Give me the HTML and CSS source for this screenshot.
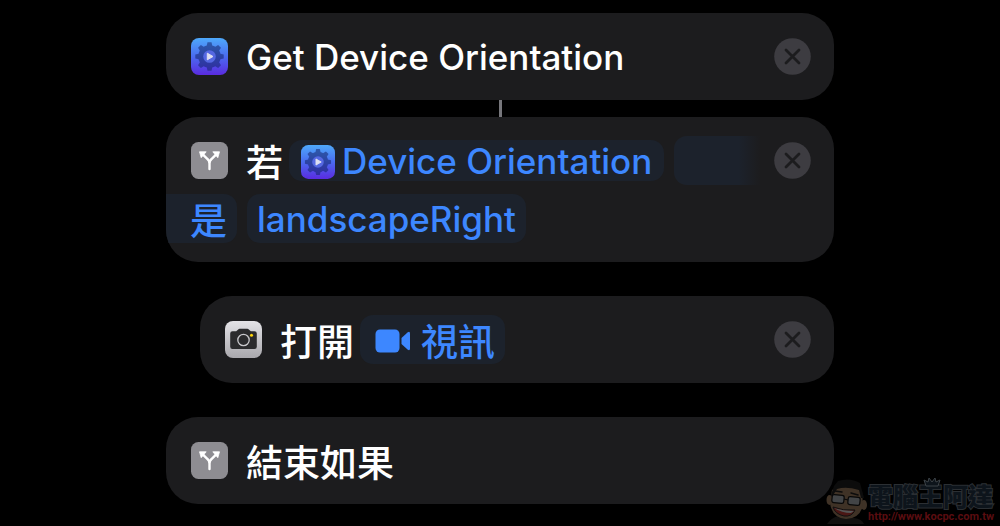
FILE: index.html
```html
<!DOCTYPE html>
<html lang="zh-Hant">
<head>
<meta charset="utf-8">
<title>Shortcut</title>
<link rel="stylesheet" href="styles.css">
</head>
<body>
<svg class="defs" aria-hidden="true">
  <defs>
    <linearGradient id="gear-bg" x1="0" y1="0" x2="0" y2="1"><stop offset="0" stop-color="#4ea9fb"/><stop offset=".5" stop-color="#4a6bef"/><stop offset="1" stop-color="#5a2be0"/></linearGradient>
    <linearGradient id="cam-bg" x1="0" y1="0" x2="0" y2="1"><stop offset="0" stop-color="#e4e3e7"/><stop offset="1" stop-color="#a9a8ad"/></linearGradient>
    <symbol id="gear" viewBox="0 0 37 37">
      <rect width="37" height="37" rx="8" fill="url(#gear-bg)"/>
      <g fill="#14246a" opacity=".55">
        <circle cx="18.500" cy="18.500" r="11.200"/>
        <path d="M15.700 8 16.500 4.300H20.500L21.300 8V29L20.500 32.700H16.500L15.700 29Z"/>
        <path d="M15.700 8 16.500 4.300H20.500L21.300 8V29L20.500 32.700H16.500L15.700 29Z" transform="rotate(45 18.500 18.500)"/>
        <path d="M15.700 8 16.500 4.300H20.500L21.300 8V29L20.500 32.700H16.500L15.700 29Z" transform="rotate(90 18.500 18.500)"/>
        <path d="M15.700 8 16.500 4.300H20.500L21.300 8V29L20.500 32.700H16.500L15.700 29Z" transform="rotate(135 18.500 18.500)"/>
      </g>
      <circle cx="18.500" cy="18.500" r="6.300" fill="#5568e2"/>
      <path d="M16.300 15.200V21.800L22 18.500Z" fill="#dedff0" stroke="#dedff0" stroke-linejoin="round"/>
    </symbol>
    <symbol id="branch" viewBox="0 0 37 37">
      <rect width="37" height="37" rx="7.500" fill="#8e8d92"/>
      <path d="M18.500 27V21.500Q18.500 18.800 16.500 17L11.500 12.200M18.500 21.500Q18.500 18.800 20.500 17L25.500 12.200" fill="none" stroke="#fff" stroke-width="2.400" stroke-linecap="round"/>
      <path d="M8.500 9.800H15.200L10.200 15.700ZM28.500 9.800H21.800L26.800 15.700Z" fill="#fff" stroke="#fff" stroke-width=".8" stroke-linejoin="round"/>
    </symbol>
    <symbol id="camera" viewBox="0 0 37 37">
      <rect width="37" height="37" rx="8" fill="url(#cam-bg)"/>
      <path d="M7.500 10.300H11.200L13.200 8.400Q13.800 7.800 14.600 7.800H22.400Q23.200 7.800 23.800 8.400L25.800 10.300H29.500Q31.800 10.300 31.800 12.600V25.700Q31.800 28 29.500 28H7.500Q5.200 28 5.200 25.700V12.600Q5.200 10.300 7.500 10.300Z" fill="#2b2b2d"/>
      <circle cx="18.500" cy="19" r="5.700" fill="none" stroke="#c8c7cb" stroke-width="1.300"/>
      <circle cx="26.500" cy="14.200" r="1.500" fill="#ffd60a"/>
    </symbol>
    <symbol id="close" viewBox="0 0 37 37">
      <circle cx="18.500" cy="18.500" r="18.300" fill="#3d3c41"/>
      <path d="M12 12 25 25M25 12 12 25" stroke="#1c1c1e" stroke-width="2.800" stroke-linecap="round"/>
    </symbol>
  </defs>
</svg>
<main class="flow">
  <section class="card">
    <div class="row">
      <svg class="icon" aria-hidden="true"><use href="#gear"/></svg>
      <span class="label">Get Device Orientation</span>
      <button class="close" aria-label="移除"><svg class="icon"><use href="#close"/></svg></button>
    </div>
  </section>
  <div class="connector"></div>
  <section class="card">
    <div class="row">
      <svg class="icon" aria-hidden="true"><use href="#branch"/></svg>
      <span class="label han">若</span>
      <button class="pill pill-variable"><svg class="icon icon-small" aria-hidden="true"><use href="#gear"/></svg>Device Orientation</button>
      <span class="pill-break"></span>
      <button class="close" aria-label="移除"><svg class="icon"><use href="#close"/></svg></button>
    </div>
    <div class="row row-continued">
      <button class="pill pill-tail han">是</button>
      <button class="pill">landscapeRight</button>
    </div>
  </section>
  <section class="card card-nested">
    <div class="row">
      <svg class="icon" aria-hidden="true"><use href="#camera"/></svg>
      <span class="label han">打開</span>
      <button class="pill pill-video han"><svg class="video" viewBox="0 0 36 24" aria-hidden="true"><rect x=".5" y=".5" width="24" height="23" rx="4.500"/><path d="M26.500 9 32.500 3.500Q35 1.800 35 4.500V19.500Q35 22.200 32.500 20.500L26.500 15Z"/></svg>視訊</button>
      <button class="close" aria-label="移除"><svg class="icon"><use href="#close"/></svg></button>
    </div>
  </section>
  <section class="card">
    <div class="row">
      <svg class="icon" aria-hidden="true"><use href="#branch"/></svg>
      <span class="label han">結束如果</span>
    </div>
  </section>
</main>
<footer class="mark">
  <svg class="face" viewBox="0 0 42 46" aria-hidden="true">
    <path d="M1 46Q5 40 12 38L28 40Q36 41 38 46Z" fill="#11100f"/>
    <ellipse cx="3.500" cy="22" rx="3" ry="5" fill="#3f3226"/><ellipse cx="38" cy="27" rx="3" ry="5" fill="#3f3226"/>
    <path d="M6 12Q20 4 36 13L37 28Q33 41 20 41Q6 40 4 25Z" fill="#3f3226"/>
    <path d="M5 17 8 8 12 3Q24 -1 34 5L38 20 35 20 33 12Q20 8 11 11L6 19Z" fill="#0c0c0c"/>
    <path d="M9 13 16 14M25 15 32 17" stroke="#0c0c0c" stroke-width="1.500" stroke-linecap="round"/>
    <g fill="#424446" stroke="#080808" stroke-width="1.200"><rect x="6" y="17" width="12" height="8" rx="2" transform="rotate(6 12 21)"/><rect x="22" y="19" width="12" height="8" rx="2" transform="rotate(6 28 23)"/><path d="M18 21 22 22"/></g>
    <path d="M7 29Q17 33 29 32Q26 39 18 38Q9 36 7 29Z" fill="#4b1715" stroke="#111"/><path d="M8 30Q17 33 28 33L25 35Q16 35 8 30Z" fill="#555"/>
  </svg>
  <div class="mark-text">
    <span class="mark-name">電腦王阿達</span>
    <a class="mark-link" href="http://www.kocpc.com.tw">http://www.kocpc.com.tw</a>
  </div>
  <svg class="crown" viewBox="0 0 18 10" aria-hidden="true"><path d="M3 9 1 3 5 5 6 1 9 5 12 1 13 5 17 3 15 9Z"/></svg>
</footer>
</body>
</html>
```
FILE: styles.css
```css
* { box-sizing: border-box; }
body {
  margin: 0;
  background: #000;
  color: #fff;
  font-family: Inter, "Noto Sans CJK TC", sans-serif;
  font-size: 35px;
  font-weight: 450;
}
.defs { position: absolute; width: 0; height: 0; }
button { font: inherit; color: inherit; border: 0; margin: 0; padding: 0; background: none; cursor: pointer; }
.flow {
  max-width: 668px;
  margin: 0 auto;
  padding-top: 13px;
  display: flex;
  flex-direction: column;
}
.card {
  background: #1c1c1e;
  border-radius: 32px;
  padding: 19px 0;
  overflow: hidden;
  display: grid;
  gap: 9px;
}
.card + .card { margin-top: 34px; }
.card-nested { margin-left: 34px; }
.connector { width: 3px; height: 17px; background: #76767b; align-self: center; }
.row {
  height: 49px;
  padding: 0 23px 0 25px;
  display: flex;
  align-items: center;
  line-height: 49px;
  white-space: nowrap;
}
.row-continued { padding-left: 0; gap: 10px; }
.icon { width: 37px; height: 37px; display: block; flex: none; }
.icon-small { width: 34px; height: 34px; }
.label { margin-left: 18px; padding-top: 2px; }
.close { margin-left: auto; border-radius: 50%; }
.pill {
  height: 49px;
  padding: 2px 10px 0;
  border-radius: 13px;
  background: #1c222c;
  color: #3d87ff;
  display: flex;
  align-items: center;
}
.han { font-family: "Noto Sans CJK TC", sans-serif; font-size: 37px; font-weight: 500; }
.pill-variable { height: 41px; padding: 2px 12px 0; margin-left: 6px; gap: 7px; }
.pill-tail { padding-left: 24px; border-radius: 0 13px 13px 0; }
.pill-video { margin-left: 6px; padding-left: 15px; gap: 10px; }
.pill-break {
  flex: 1;
  height: 49px;
  margin: 0 14px 0 10px;
  border-radius: 13px 0 0 13px;
  background: linear-gradient(to right, #1c222c 75%, #1c1c1e);
}
.video { width: 36px; height: 24px; fill: #3d87ff; }
.mark { position: absolute; right: 6px; bottom: 2px; display: flex; align-items: flex-end; }
.face { width: 42px; height: 46px; }
.mark-text { display: grid; }
.mark-name { font-size: 25px; line-height: 26px; font-weight: 900; color: #0d141b; -webkit-text-stroke: 2px #2b2f33; paint-order: stroke fill; }
.mark-link { font: bold 11px/14px Roboto, sans-serif; color: #5a0d10; text-decoration: none; }
.crown { position: absolute; right: 53px; top: -1px; width: 18px; height: 10px; fill: #0d141b; stroke: #3d4348; }
```
